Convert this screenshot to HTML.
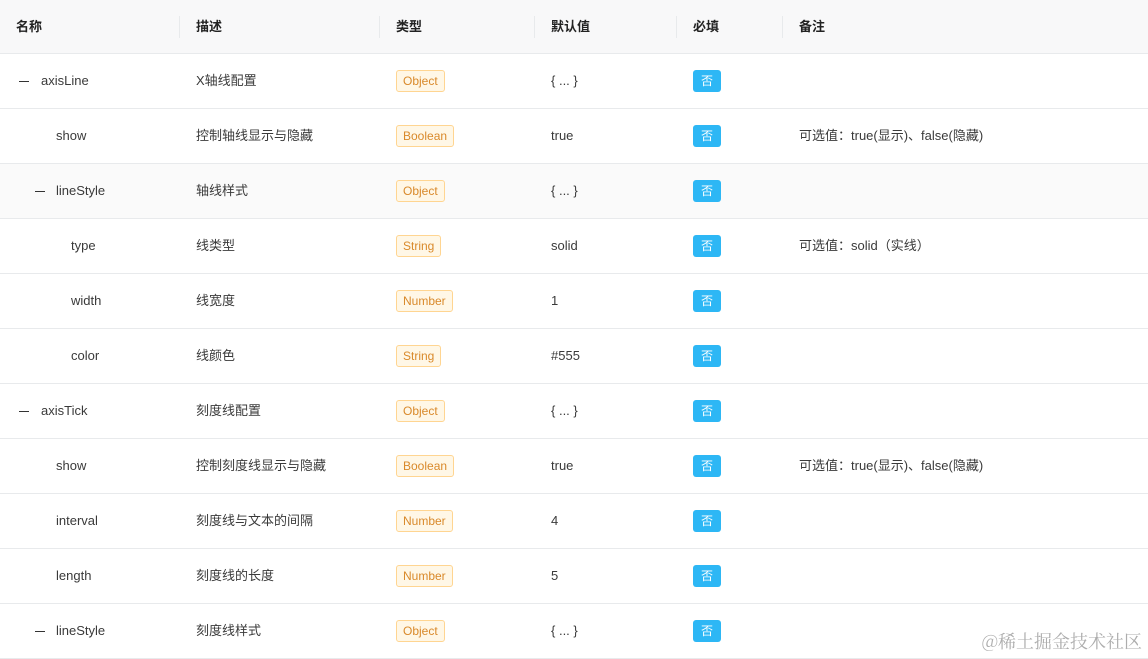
<!DOCTYPE html>
<html><head><meta charset="utf-8">
<style>
*{margin:0;padding:0;box-sizing:border-box}
body{width:1148px;height:658px;overflow:hidden;background:#fff;font-family:"Liberation Sans","Noto Sans CJK SC",sans-serif;font-size:13px;color:#333;position:relative}
.hd{height:54px;background:#f8f8f9;border-bottom:1px solid #e8eaec;position:relative;font-weight:bold;color:#222;font-size:13px}
.hd span{position:absolute;top:0;height:53px;line-height:53px}
.sep{position:absolute;top:16px;width:1px;height:22px;background:#e8eaec}
.row{height:55px;border-bottom:1px solid #e8eaec;position:relative}
.row.g{background:#fafafa}
.row>span{position:absolute;top:0;height:54px;line-height:54px;white-space:nowrap;color:#3a3a3a}
.row>.tag{top:16px;height:22px;line-height:20px;padding:0 6px;border:1px solid #ffd591;background:#fff7e6;color:#d9892a;border-radius:3px;font-size:12px}
.row>.no{top:16px;left:693px;width:28px;height:22px;background:#2db7f5;color:#fff;border-radius:3px;text-align:center;line-height:22px;font-size:12px}
.mi{position:absolute;top:27px;width:10px;height:1px;background:#333}
.wm{position:absolute;right:6px;top:628px;color:#999;font-size:18px;font-family:"Noto Serif CJK SC",serif;opacity:.8}
</style></head><body>
<div class="hd">
<span style="left:16px">名称</span><div class="sep" style="left:179px"></div>
<span style="left:196px">描述</span><div class="sep" style="left:379px"></div>
<span style="left:396px">类型</span><div class="sep" style="left:534px"></div>
<span style="left:551px">默认值</span><div class="sep" style="left:676px"></div>
<span style="left:693px">必填</span><div class="sep" style="left:782px"></div>
<span style="left:799px">备注</span>
</div>

<div class="row"><i class="mi" style="left:19px"></i><span style="left:41px">axisLine</span><span style="left:196px">X轴线配置</span><span class="tag" style="left:396px">Object</span><span style="left:551px">{ ... }</span><span class="no">否</span></div>
<div class="row"><span style="left:56px">show</span><span style="left:196px">控制轴线显示与隐藏</span><span class="tag" style="left:396px">Boolean</span><span style="left:551px">true</span><span class="no">否</span><span style="left:799px">可选值：true(显示)、false(隐藏)</span></div>
<div class="row g"><i class="mi" style="left:35px"></i><span style="left:56px">lineStyle</span><span style="left:196px">轴线样式</span><span class="tag" style="left:396px">Object</span><span style="left:551px">{ ... }</span><span class="no">否</span></div>
<div class="row"><span style="left:71px">type</span><span style="left:196px">线类型</span><span class="tag" style="left:396px">String</span><span style="left:551px">solid</span><span class="no">否</span><span style="left:799px">可选值：solid（实线）</span></div>
<div class="row"><span style="left:71px">width</span><span style="left:196px">线宽度</span><span class="tag" style="left:396px">Number</span><span style="left:551px">1</span><span class="no">否</span></div>
<div class="row"><span style="left:71px">color</span><span style="left:196px">线颜色</span><span class="tag" style="left:396px">String</span><span style="left:551px">#555</span><span class="no">否</span></div>
<div class="row"><i class="mi" style="left:19px"></i><span style="left:41px">axisTick</span><span style="left:196px">刻度线配置</span><span class="tag" style="left:396px">Object</span><span style="left:551px">{ ... }</span><span class="no">否</span></div>
<div class="row"><span style="left:56px">show</span><span style="left:196px">控制刻度线显示与隐藏</span><span class="tag" style="left:396px">Boolean</span><span style="left:551px">true</span><span class="no">否</span><span style="left:799px">可选值：true(显示)、false(隐藏)</span></div>
<div class="row"><span style="left:56px">interval</span><span style="left:196px">刻度线与文本的间隔</span><span class="tag" style="left:396px">Number</span><span style="left:551px">4</span><span class="no">否</span></div>
<div class="row"><span style="left:56px">length</span><span style="left:196px">刻度线的长度</span><span class="tag" style="left:396px">Number</span><span style="left:551px">5</span><span class="no">否</span></div>
<div class="row"><i class="mi" style="left:35px"></i><span style="left:56px">lineStyle</span><span style="left:196px">刻度线样式</span><span class="tag" style="left:396px">Object</span><span style="left:551px">{ ... }</span><span class="no">否</span></div>
<div class="wm">@稀土掘金技术社区</div>
</body></html>
